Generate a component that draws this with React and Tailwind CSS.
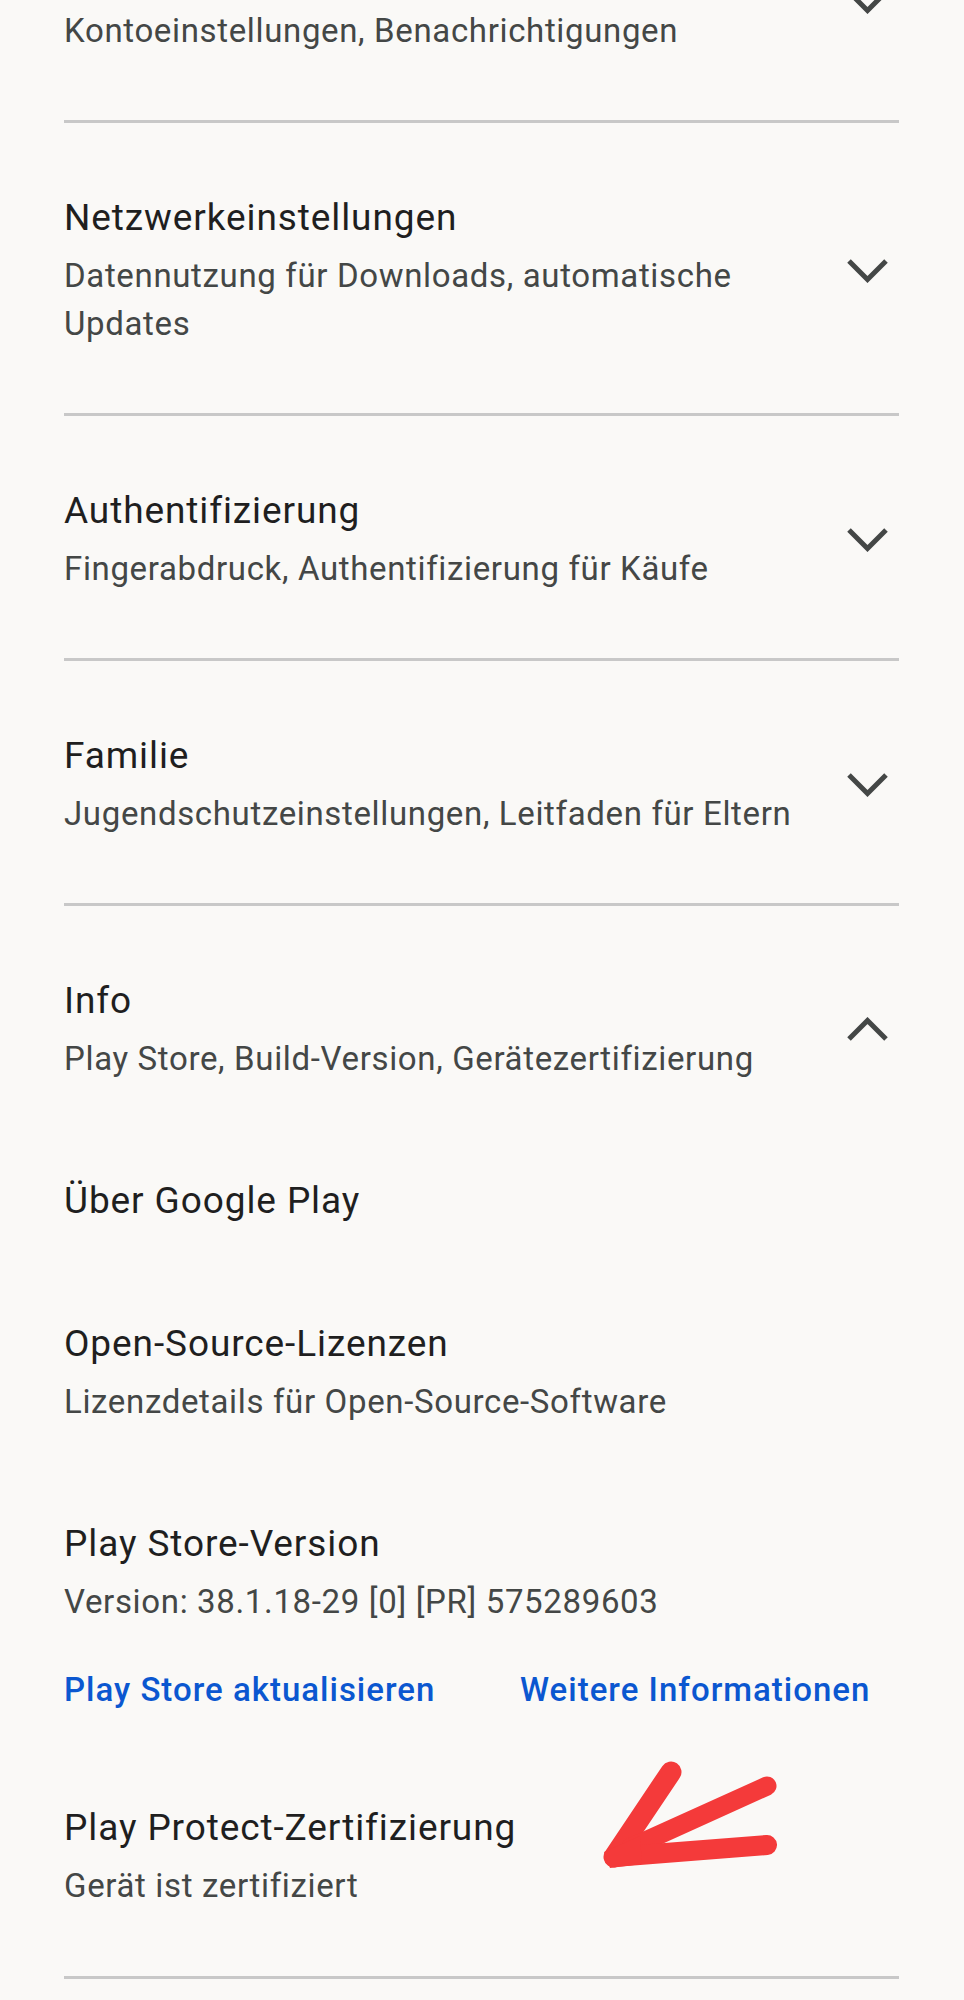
import React from "react";

const FONT = { fontFamily: "Roboto, 'Noto Sans', sans-serif" };

function Chevron({ up }) {
  return (
    <svg width="41" height="25" viewBox="0 0 41 25" className="shrink-0 mr-[11px]">
      {up ? (
        <path d="M2 22 L20.5 3.5 L39 22" fill="none" stroke="#444746" strokeWidth="5" strokeLinejoin="miter" />
      ) : (
        <path d="M2 3 L20.5 21.5 L39 3" fill="none" stroke="#444746" strokeWidth="5" strokeLinejoin="miter" />
      )}
    </svg>
  );
}

function Title({ children }) {
  return (
    <div className="text-[37px] leading-[52px] text-[#1f1f1f] tracking-[0.9px] whitespace-nowrap">{children}</div>
  );
}

function Sub({ children }) {
  return (
    <div className="mt-[8px] text-[33px] leading-[48px] text-[#444746] tracking-[0.65px] whitespace-nowrap">{children}</div>
  );
}

function Section({ title, sub, up, className = "" }) {
  return (
    <div className={"flex items-center justify-between " + className}>
      <div className="flex flex-col">
        {title ? <Title>{title}</Title> : <div className="h-[52px]" />}
        <Sub>{sub}</Sub>
      </div>
      <Chevron up={up} />
    </div>
  );
}

function Divider() {
  return <div className="h-[3px] bg-[#c8c8c8]" />;
}

export default function App() {
  return (
    <div className="min-h-[2000px] bg-[#faf9f7] overflow-hidden" style={FONT}>
      <div className="pl-[64px] pr-[65px]">
        <Section sub="Kontoeinstellungen, Benachrichtigungen" className="-mt-[53px] pb-[65px]" />
        <Divider />
        <Section
          title="Netzwerkeinstellungen"
          sub={<>Datennutzung für Downloads, automatische<br />Updates</>}
          className="pt-[69px] pb-[65px]"
        />
        <Divider />
        <Section title="Authentifizierung" sub="Fingerabdruck, Authentifizierung für Käufe" className="pt-[69px] pb-[65px]" />
        <Divider />
        <Section title="Familie" sub="Jugendschutzeinstellungen, Leitfaden für Eltern" className="pt-[69px] pb-[65px]" />
        <Divider />
        <Section title="Info" sub="Play Store, Build-Version, Gerätezertifizierung" up className="pt-[69px]" />

        <div className="mt-[92px]">
          <Title>Über Google Play</Title>
        </div>

        <div className="mt-[91px]">
          <Title>Open-Source-Lizenzen</Title>
          <Sub>Lizenzdetails für Open-Source-Software</Sub>
        </div>

        <div className="mt-[92px]">
          <Title>Play Store-Version</Title>
          <Sub>Version: 38.1.18-29 [0] [PR] 575289603</Sub>
        </div>

        <div className="mt-[40px] flex text-[33px] leading-[48px] font-medium text-[#0b57d0] tracking-[1px] whitespace-nowrap">
          <div className="w-[456px]">Play Store aktualisieren</div>
          <div>Weitere Informationen</div>
        </div>

        <div className="relative mt-[88px] pb-[66px]">
          <Title>Play Protect-Zertifizierung</Title>
          <Sub>Gerät ist zertifiziert</Sub>
          <svg
            className="absolute left-[526px] top-[-52px] pointer-events-none"
            width="200"
            height="130"
            viewBox="590 1750 200 130"
          >
            <g stroke="#f43a3a" strokeLinecap="round" fill="none">
              <line x1="671" y1="1772" x2="614" y2="1857" strokeWidth="21" />
              <line x1="767" y1="1786" x2="630" y2="1848" strokeWidth="19" />
              <line x1="767" y1="1845" x2="614" y2="1857" strokeWidth="20" />
            </g>
            <polygon points="604,1852 640,1836 642,1864 610,1868" fill="#f43a3a" />
          </svg>
        </div>
        <Divider />
      </div>
    </div>
  );
}
